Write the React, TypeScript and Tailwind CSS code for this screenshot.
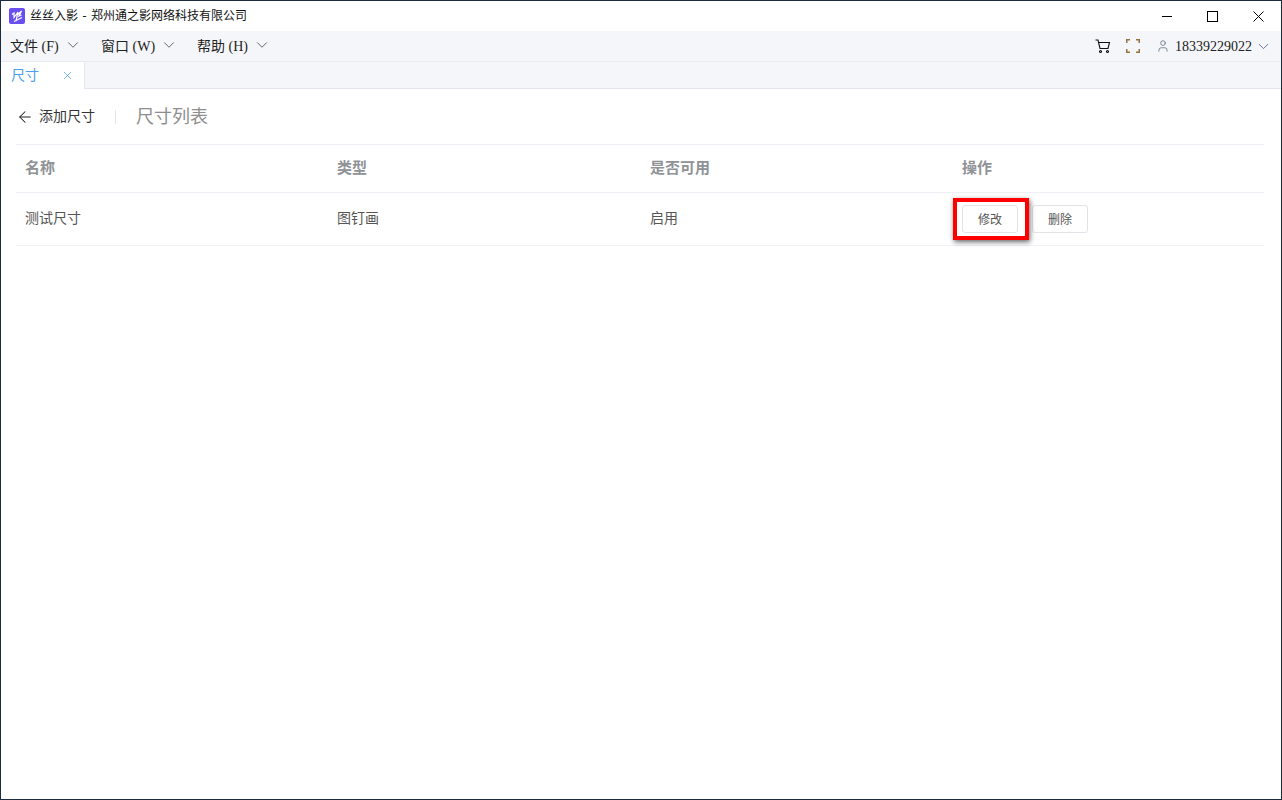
import { ChevronDown, X, ArrowLeft, User } from "lucide-react";

const FONT = "font-['Liberation_Serif','Noto_Sans_CJK_SC',serif]";

const menus = [
  { label: "文件", key: "(F)", width: "w-[91px]" },
  { label: "窗口", key: "(W)", width: "w-[96px]" },
  { label: "帮助", key: "(H)", width: "w-[80px]" },
];

const columns = ["名称", "类型", "是否可用", "操作"];

const Logo = () => (
  <svg width="16" height="16" viewBox="0 0 16 16">
    <rect width="16" height="16" rx="2" fill="#6a4ff0" />
    <path d="M3 6.5 5 5 5 9.5 9 4 7 13M8 7.5 12.5 3 10 8 12.5 7M5 13.5 13 9.5" fill="none" stroke="#fff" strokeWidth="1.2" />
  </svg>
);

const Cart = () => (
  <svg width="16" height="15" viewBox="0 0 16 15" fill="none" stroke="#111" strokeWidth="1.1">
    <path d="M.5 1H3l2 8.5h8L14.5 3.5H3.5" />
    <circle cx="5.5" cy="12.5" r="1" />
    <circle cx="12.5" cy="12.5" r="1" />
  </svg>
);

const FullScreen = () => (
  <svg width="14" height="14" viewBox="0 0 14 14" fill="none" stroke="#96723f" strokeWidth="1.5">
    <path d="M.75 4V.75H4M10 .75h3.25V4M13.25 10v3.25H10M4 13.25H.75V10" />
  </svg>
);

export default function App() {
  return (
    <div className={`h-[800px] w-[1282px] overflow-hidden border border-[#1c2d41] bg-white ${FONT}`}>
      {/* title bar */}
      <div className="flex h-[30px] items-center justify-between">
        <div className="flex items-center gap-[5px] pl-2">
          <Logo />
          <span className="text-[12px] text-[#111] [word-spacing:1.5px]">丝丝入影 - 郑州通之影网络科技有限公司</span>
        </div>
        <div className="flex items-center">
          <button className="flex h-[30px] w-[45px] items-center justify-center">
            <svg width="10" height="10" viewBox="0 0 10 10" stroke="#000" strokeWidth="1"><path d="M0 5.5h10" /></svg>
          </button>
          <button className="flex h-[30px] w-[46px] items-center justify-center">
            <svg width="11" height="11" viewBox="0 0 11 11" fill="none" stroke="#000" strokeWidth="1"><rect x=".5" y=".5" width="10" height="10" /></svg>
          </button>
          <button className="flex h-[30px] w-[46px] items-center justify-center">
            <svg width="11" height="11" viewBox="0 0 11 11" fill="none" stroke="#000" strokeWidth="1"><path d="M.5.5l10 10M10.5.5l-10 10" /></svg>
          </button>
        </div>
      </div>

      {/* menu bar */}
      <div className="flex h-[31px] items-center justify-between border-b border-[#e9ebf2] bg-[#f5f6fa] pl-[9px] pr-[9px]">
        <div className="flex items-center">
          {menus.map((m) => (
            <div key={m.label} className={`flex items-center ${m.width}`}>
              <span className="text-[14px] text-[#222]">
                {m.label} {m.key}
              </span>
              <ChevronDown size={18} strokeWidth={1.2} className="ml-[5px] -translate-y-px text-[#4f5a68]" />
            </div>
          ))}
        </div>
        <div className="flex items-center">
          <Cart />
          <span className="ml-[15px]">
            <FullScreen />
          </span>
          <User size={14} strokeWidth={1.3} className="ml-[16px] text-[#5a6a7a]" />
          <span className="ml-[5px] text-[14px] text-[#222]">18339229022</span>
          <ChevronDown size={17} strokeWidth={1.2} className="ml-[3px] text-[#4f6288]" />
        </div>
      </div>

      {/* tabs */}
      <div className="flex h-[27px] border-b border-[#e4e6ee] bg-[#f5f6fa]">
        <div className="flex h-[27px] w-[84px] items-center justify-between border-r border-[#e4e6ee] bg-white pl-[10px] pr-[10px]">
          <span className="text-[14px] text-[#4a9ff0]">尺寸</span>
          <X size={13} strokeWidth={1.3} className="text-[#4a9ff0]" />
        </div>
      </div>

      {/* page */}
      <div className="pl-[15px] pr-[17px]">
        <div className="flex h-[55px] items-center">
          <ArrowLeft size={18} strokeWidth={1.4} className="text-[#222]" />
          <span className="ml-[5px] text-[14px] text-[#333]">添加尺寸</span>
          <span className="ml-[20px] h-[14px] w-px bg-[#e5e5e5]" />
          <span className="ml-[20px] translate-y-px text-[18px] text-[#8e8e8e]">尺寸列表</span>
        </div>

        <div className="grid h-[49px] grid-cols-[312px_313px_312px_1fr] items-center border-y border-[#eef0f5] px-[9px] text-[15px] font-bold text-[#8f9296]">
          {columns.map((c) => (
            <span key={c}>{c}</span>
          ))}
        </div>

        <div className="grid h-[53px] grid-cols-[312px_313px_312px_1fr] items-center border-b border-[#eef0f5] px-[9px] text-[14px] text-[#555]">
          <span className="-translate-y-px">测试尺寸</span>
          <span className="-translate-y-px">图钉画</span>
          <span className="-translate-y-px">启用</span>
          <div className="flex items-center gap-[14px] text-[12px]">
            <div className="relative">
              <button className="h-[28px] w-[56px] rounded-[3px] border border-[#e2e3e8] bg-white pt-px text-[#555]">修改</button>
              <div className="absolute -left-[9px] -top-[7px] h-[42px] w-[76px] border-[4px] border-[#f00] shadow-[1px_2px_5px_rgba(0,0,0,0.6)]" />
            </div>
            <button className="h-[28px] w-[56px] rounded-[3px] border border-[#e2e3e8] bg-white pt-px text-[#555]">删除</button>
          </div>
        </div>
      </div>
    </div>
  );
}
